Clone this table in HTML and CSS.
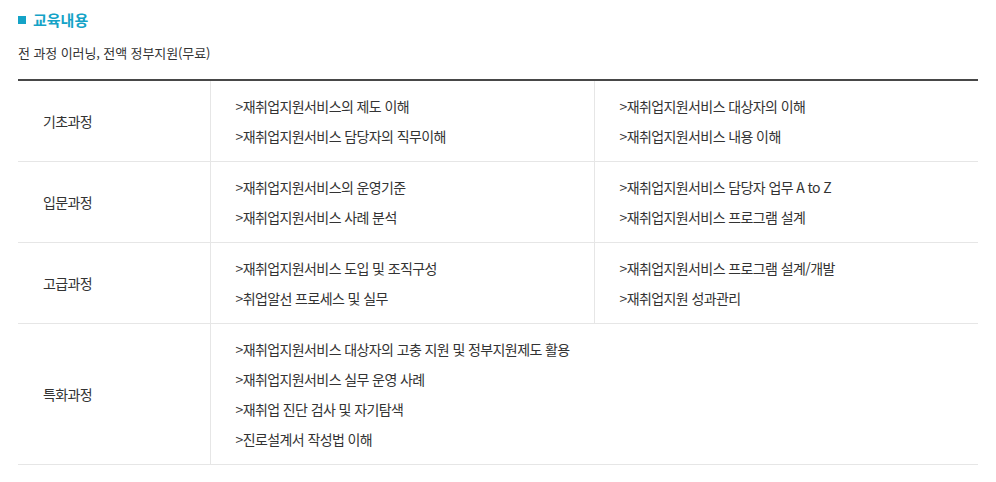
FILE: index.html
```html
<!DOCTYPE html>
<html lang="ko">
<head>
<meta charset="utf-8">
<link rel="stylesheet" href="styles.css">
</head>
<body>
<div class="wrap">
  <h2 class="title"><span class="sq"></span>교육내용</h2>
  <p class="desc">전 과정 이러닝, 전액 정부지원(무료)</p>
  <table class="course">
    <tr>
      <th>기초과정</th>
      <td><p>&gt;재취업지원서비스의 제도 이해</p><p>&gt;재취업지원서비스 담당자의 직무이해</p></td>
      <td><p>&gt;재취업지원서비스 대상자의 이해</p><p>&gt;재취업지원서비스 내용 이해</p></td>
    </tr>
    <tr>
      <th>입문과정</th>
      <td><p>&gt;재취업지원서비스의 운영기준</p><p>&gt;재취업지원서비스 사례 분석</p></td>
      <td><p>&gt;재취업지원서비스 담당자 업무 A to Z</p><p>&gt;재취업지원서비스 프로그램 설계</p></td>
    </tr>
    <tr>
      <th>고급과정</th>
      <td><p>&gt;재취업지원서비스 도입 및 조직구성</p><p>&gt;취업알선 프로세스 및 실무</p></td>
      <td><p>&gt;재취업지원서비스 프로그램 설계/개발</p><p>&gt;재취업지원 성과관리</p></td>
    </tr>
    <tr>
      <th>특화과정</th>
      <td colspan="2"><p>&gt;재취업지원서비스 대상자의 고충 지원 및 정부지원제도 활용</p><p>&gt;재취업지원서비스 실무 운영 사례</p><p>&gt;재취업 진단 검사 및 자기탐색</p><p>&gt;진로설계서 작성법 이해</p></td>
    </tr>
  </table>
</div>
</body>
</html>
```
FILE: styles.css
```css
* { box-sizing: border-box; }
html, body { margin: 0; padding: 0; background: #fff; }
body {
  font-family: "Noto Sans CJK KR", "Noto Sans", sans-serif;
  color: #333;
  font-size: 13px;
}
.wrap { padding: 9px 18px 0 18px; }
.title {
  margin: 0;
  display: flex;
  align-items: center;
  gap: 7px;
  font-size: 15px;
  font-weight: 700;
  color: #14a3c7;
  line-height: 22px;
  letter-spacing: 0;
}
.sq { width: 8px; height: 8px; background: #14a3c7; display: block; }
.desc {
  margin: 11px 0 0 0;
  line-height: 22px;
  letter-spacing: -0.1px;
  color: #333;
}
.course {
  margin-top: 15px;
  width: 960px;
  border-collapse: collapse;
  border-top: 2px solid #474747;
}
.course th, .course td {
  border-bottom: 1px solid #e6e6e6;
  text-align: left;
  vertical-align: middle;
  font-size: 14px;
  letter-spacing: -0.6px;
  font-weight: 400;
}
.course th {
  width: 192px;
  padding: 0 25px;
  border-right: 1px solid #e6e6e6;
}
.course td {
  padding: 10px 25px 10px 25px;
  width: 384px;
}
.course td + td { border-left: 1px solid #e6e6e6; }
.course p { margin: 0; line-height: 30px; }
```
